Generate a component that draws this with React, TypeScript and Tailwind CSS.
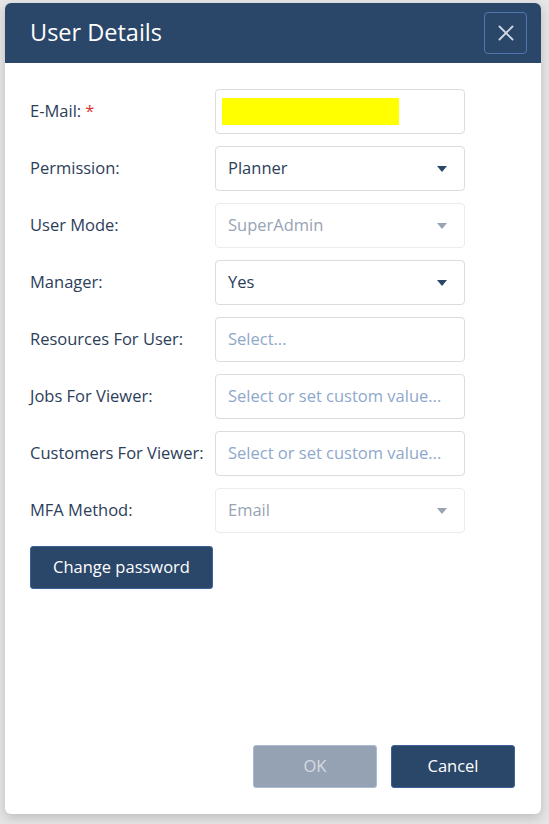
import { X } from 'lucide-react'

const font = { fontFamily: '"Open Sans", "Noto Sans", sans-serif' }

function Caret({ disabled }: { disabled?: boolean }) {
  return (
    <svg width="10" height="6" viewBox="0 0 10 6" className={disabled ? 'text-[#98a3b3]' : 'text-[#2a4669]'}>
      <path d="M0 0h10L5 6z" fill="currentColor" />
    </svg>
  )
}

type Row = {
  label: string
  required?: boolean
  value?: string
  placeholder?: string
  select?: boolean
  disabled?: boolean
  mask?: boolean
}

const rows: Row[] = [
  { label: 'E-Mail:', required: true, mask: true },
  { label: 'Permission:', value: 'Planner', select: true },
  { label: 'User Mode:', value: 'SuperAdmin', select: true, disabled: true },
  { label: 'Manager:', value: 'Yes', select: true },
  { label: 'Resources For User:', placeholder: 'Select...' },
  { label: 'Jobs For Viewer:', placeholder: 'Select or set custom value...' },
  { label: 'Customers For Viewer:', placeholder: 'Select or set custom value...' },
  { label: 'MFA Method:', value: 'Email', select: true, disabled: true },
]

function Field({ row }: { row: Row }) {
  return (
    <div className="flex items-center">
      <div className="w-[185px] text-[16.5px] text-[#2c3e5a]">
        {row.label}
        {row.required && <span className="text-[#e03131] ml-1">*</span>}
      </div>
      <div
        className={`w-[250px] h-[45px] rounded-[4px] border flex items-center pl-3 pr-[17px] text-[16.5px] ${
          row.disabled ? 'border-[#ececec] text-[#98a3b3]' : 'border-[#dcdcdc] text-[#2c3e5a]'
        }`}
      >
        {row.mask && <div className="w-[177px] h-[27px] bg-[#ffff00] -ml-[6px]" />}
        {row.value && <span className="flex-1">{row.value}</span>}
        {row.placeholder && <span className="flex-1 text-[#8ea8cb] truncate">{row.placeholder}</span>}
        {row.select && <Caret disabled={row.disabled} />}
      </div>
    </div>
  )
}

export default function App() {
  return (
    <div style={font} className="w-[549px] h-[824px] bg-[#e6e6e6] overflow-hidden pt-[3px] pl-[5px]">
      <div className="w-[536px] h-[811px] bg-white rounded-[6px] shadow-[0_4px_12px_rgba(0,0,0,0.18)] flex flex-col overflow-hidden">
        <div className="h-[60px] bg-[#2a4669] flex items-center justify-between pl-[25px] pr-[14px] shrink-0">
          <h2 className="text-[23.5px] text-white">User Details</h2>
          <button className="w-[43px] h-[42px] rounded-[4px] border border-[#4f77ad] flex items-center justify-center text-[#cfd8e4]">
            <X size={26} strokeWidth={1.75} />
          </button>
        </div>
        <div className="flex-1 flex flex-col px-[25px] pt-[26px]">
          <div className="flex flex-col gap-[12px]">
            {rows.map(r => (
              <Field key={r.label} row={r} />
            ))}
          </div>
          <button className="mt-[13px] w-[183px] h-[43px] rounded-[3px] bg-[#2a4669] border border-[#3d6295] text-white text-[16.5px]">
            Change password
          </button>
          <div className="mt-auto mb-[26px] flex justify-end gap-[14px] pr-[1px]">
            <button className="w-[124px] h-[43px] rounded-[3px] bg-[#95a2b4] border border-[#a9bad2] text-[#d6dbe2] text-[16.5px]">
              OK
            </button>
            <button className="w-[124px] h-[43px] rounded-[3px] bg-[#2a4669] border border-[#3d6295] text-white text-[16.5px]">
              Cancel
            </button>
          </div>
        </div>
      </div>
    </div>
  )
}
